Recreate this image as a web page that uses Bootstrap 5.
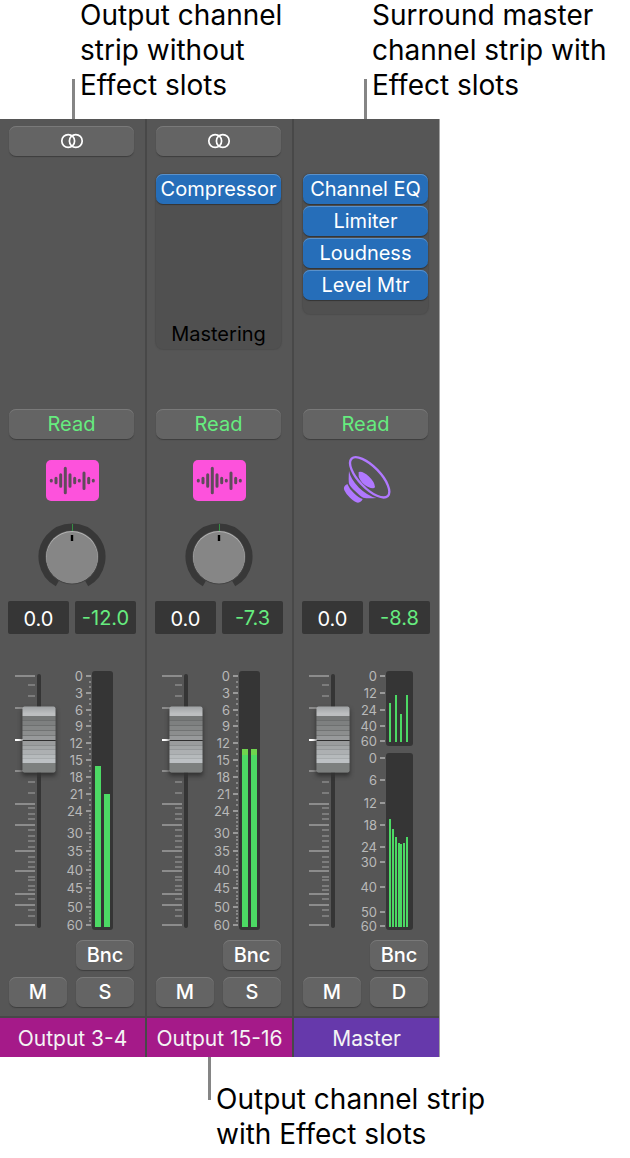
<!DOCTYPE html>
<html lang="en">
<head>
<meta charset="utf-8">
<meta name="viewport" content="width=device-width, initial-scale=1">
<title>Output and master channel strips</title>
<link rel="stylesheet" href="https://cdn.jsdelivr.net/npm/bootstrap@5.3.0/dist/css/bootstrap.min.css">
<style>
body { font-family: Inter, "Liberation Sans", sans-serif; background: #fff; color: #000; }
.callouts { display: grid; grid-template-columns: 292px 1fr; height: 119px; }
.callout-text { font-size: 28px; line-height: 35px; margin: -2px 0 0 5px; white-space: nowrap; }
.leader { width: 3px; height: 40px; background: #858585; flex: none; }
.callout-top { padding-left: 72px; }
.callout-bottom { padding-left: 208px; }
.callout-bottom .leader { height: 43px; }
.callout-bottom .callout-text { margin: 25px 0 0 5px; }

.mixer { display: grid; grid-template-columns: 147fr 147fr 146fr; max-width: 440px; background: #565656; color: #f4f4f4; font-size: 20px; line-height: 30px; }
.strip { display: flex; flex-direction: column; border-right: 2px solid #484848; padding-top: 7px; }
.strip:last-child { border-right: 1px solid #a2a2a2; }
.inset { margin-left: 9px; margin-right: 11px; }
.key { height: 30px; padding: 0; border: 0; border-radius: 7px; color: #fff; background: #646464; font: inherit; box-shadow: inset 0 1px #797979, 0 1px 1px #3e3e3e; display: flex; align-items: center; justify-content: center; }
.key-read { color: #66ec7f; }
.io { height: 30px; }
.effects { height: 235px; margin-top: 18px; }
.rack { background: #505050; border-radius: 7px; display: flex; flex-direction: column; gap: 2px; box-shadow: 0 0 1px 1px #4d4d4d; }
.rack-tall { height: 175px; }
.rack-short { height: 140px; }
.fx { background: #266eb9; box-shadow: inset 0 1px #5a91ca, 0 1px 1px #333; white-space: nowrap; }
.channel-icon { height: 50px; margin-top: 16px; }
.pan { height: 68px; margin-top: 18px; position: relative; }
.pan input { width: 66px; }
.readouts { display: grid; grid-template-columns: 1fr 1fr; gap: 6px; margin: 10px 9px 0 8px; }
.readout { height: 33px; line-height: 31px; min-width: 0; width: 100%; padding: 2px 0 0; border: 0; border-radius: 2px; background: #363636; color: #fff; text-align: center; }
.peak { color: #66ec7f; }
.levels { position: relative; height: 268px; margin-top: 34px; }
.levels svg { display: block; }
.levels text { font-size: 13px; fill: #b9b9b9; text-anchor: end; }
.fader { position: absolute; left: -89px; top: 116px; width: 256px; height: 33px; margin: 0; transform: rotate(-90deg); appearance: none; -webkit-appearance: none; background: transparent; }
.fader::-webkit-slider-thumb {
  -webkit-appearance: none; width: 66px; height: 33px; border-radius: 2px; box-shadow: -3px 0 4px #333;
  background: linear-gradient(to right, #7d807f 0 9px, #bdc1c4 9px 14px, #a9adaf 14px 15px, #b6babc 15px 18px, #a0a4a6 18px 19px, #adb0b2 19px 23px, #95989a 23px 24px, #a3a6a7 24px 27px, #8b8e8f 27px 28px, #9a9c9d 28px 32px, #2e2e2e 32px 33px, #989a9b 33px 37px, #787a7a 37px 38px, #8c8e8e 38px 42px, #727474 42px 43px, #858787 43px 47px, #6e7070 47px 48px, #7e8080 48px 52px, #6c6e6e 52px 53px, #757777 53px 57px, #bcbec0 57px 59px, #a3a6a8 65px 66px);
}
.buttons { display: grid; grid-template-columns: 1fr 1fr; column-gap: 9px; row-gap: 7px; margin-top: 4px; font-weight: 500; }
.bounce { grid-column: 2; }
.strip-name { margin-top: 9px; border-top: 2px solid #484848; height: 41px; font-size: 21px; line-height: 37px; text-align: center; white-space: nowrap; }
.strip-name span { padding-top: 2px; }
.name-output span { background: #a51a89; }
.name-master span { background: #6639ab; }
</style>
</head>
<body>

<svg width="0" height="0" class="position-absolute" aria-hidden="true">
  <defs>
    <symbol id="stereo" viewBox="0 0 24 16">
      <g fill="none" stroke="#fff" stroke-width="1.7"><circle cx="8.2" cy="8" r="6.4"/><circle cx="15.8" cy="8" r="6.4"/></g>
    </symbol>
    <symbol id="wave" viewBox="0 0 53 41">
      <rect width="53" height="41" rx="5" fill="#fd52dc"/>
      <path d="M5.3 20.3v.6M10 18.3v4.4M14.7 14.8v11.4M19.3 8.2v24.6M24 14.8v11.4M28.7 18.3v4.4M33.3 20.3v.6M38 13v15.6M42.7 18.3v4.4M47.3 20.3v.6" stroke="#614a5c" stroke-width="3" stroke-linecap="round"/>
    </symbol>
    <symbol id="speaker" viewBox="157 163 150 150">
      <g fill="#b078ff">
        <ellipse cx="240" cy="230" rx="78" ry="32" transform="rotate(46 240 230)" fill="none" stroke="#b078ff" stroke-width="7"/>
        <path d="M207 214q12-4 30 13t19 32q-3 8-22-1t-27-30z"/>
        <path d="M178 211q5 25 30 50 25 24 52 31-26 2-39-1-7-2-24-19-17-16-19-23-2-10 0-38z"/>
        <path d="M173 250q-14 7-9 19 4 10 17 22 14 13 24 15 10-1 14-11-12-3-26-17-14-13-20-28z"/>
      </g>
    </symbol>
    <symbol id="knob" viewBox="0 0 68 68">
      <path d="M19.5 60.2A30 30 0 1 1 48.5 60.2" fill="none" stroke="#383838" stroke-width="7"/>
      <circle cx="34" cy="35" r="26.5" fill="#454545"/>
      <circle cx="34" cy="34" r="26" fill="#b5b5b5"/>
      <circle cx="34" cy="34.7" r="25.7" fill="#868686"/>
      <path d="M34.5 1v7" stroke="#359044"/>
      <path d="M34 12v6" stroke="#000" stroke-width="2.4"/>
    </symbol>
  </defs>
</svg>

<header class="callouts">
  <div class="callout-top d-flex align-items-end"><span class="leader"></span>
    <p class="callout-text align-self-start">Output channel<br>strip without<br>Effect slots</p></div>
  <div class="callout-top d-flex align-items-end"><span class="leader"></span>
    <p class="callout-text align-self-start">Surround master<br>channel strip with<br>Effect slots</p></div>
</header>

<main class="mixer">
  <section class="strip" aria-label="Output 3-4">
    <button type="button" class="key inset" aria-label="Stereo format"><svg width="24" height="16"><use href="#stereo"/></svg></button>
    <div class="effects"></div>
    <button type="button" class="key key-read inset">Read</button>
    <div class="channel-icon d-flex justify-content-center align-items-center"><svg width="53" height="41"><use href="#wave"/></svg></div>
    <label class="pan inset d-flex justify-content-center"><svg width="68" height="68"><use href="#knob"/></svg>
      <input type="range" min="-64" max="63" value="0" class="opacity-0 position-absolute h-100" aria-label="Pan"></label>
    <div class="readouts"><input class="readout" value="0.0" aria-label="Volume"><output class="readout peak">-12.0</output></div>
    <div class="levels" data-meter="first"><input type="range" class="fader" value="82" aria-label="Fader"></div>
    <div class="buttons inset"><button type="button" class="key bounce">Bnc</button><button type="button" class="key">M</button><button type="button" class="key">S</button></div>
    <div class="strip-name name-output"><span class="d-block">Output 3-4</span></div>
  </section>

  <section class="strip" aria-label="Output 15-16">
    <button type="button" class="key inset" aria-label="Stereo format"><svg width="24" height="16"><use href="#stereo"/></svg></button>
    <div class="effects inset"><div class="rack rack-tall">
      <button type="button" class="key fx">Compressor</button>
      <div class="mt-auto text-center text-black">Mastering</div>
    </div></div>
    <button type="button" class="key key-read inset">Read</button>
    <div class="channel-icon d-flex justify-content-center align-items-center"><svg width="53" height="41"><use href="#wave"/></svg></div>
    <label class="pan inset d-flex justify-content-center"><svg width="68" height="68"><use href="#knob"/></svg>
      <input type="range" min="-64" max="63" value="0" class="opacity-0 position-absolute h-100" aria-label="Pan"></label>
    <div class="readouts"><input class="readout" value="0.0" aria-label="Volume"><output class="readout peak">-7.3</output></div>
    <div class="levels" data-meter="second"><input type="range" class="fader" value="82" aria-label="Fader"></div>
    <div class="buttons inset"><button type="button" class="key bounce">Bnc</button><button type="button" class="key">M</button><button type="button" class="key">S</button></div>
    <div class="strip-name name-output"><span class="d-block">Output 15-16</span></div>
  </section>

  <section class="strip" aria-label="Master">
    <div class="io"></div>
    <div class="effects inset"><div class="rack rack-short">
      <button type="button" class="key fx">Channel EQ</button>
      <button type="button" class="key fx">Limiter</button>
      <button type="button" class="key fx">Loudness</button>
      <button type="button" class="key fx">Level Mtr</button>
    </div></div>
    <button type="button" class="key key-read inset">Read</button>
    <div class="channel-icon d-flex justify-content-center align-items-center"><svg width="50" height="50"><use href="#speaker"/></svg></div>
    <div class="pan"></div>
    <div class="readouts"><input class="readout" value="0.0" aria-label="Volume"><output class="readout peak">-8.8</output></div>
    <div class="levels" data-meter="master"><input type="range" class="fader" value="82" aria-label="Fader"></div>
    <div class="buttons inset"><button type="button" class="key bounce">Bnc</button><button type="button" class="key">M</button><button type="button" class="key">D</button></div>
    <div class="strip-name name-master"><span class="d-block">Master</span></div>
  </section>
</main>

<footer class="callout-bottom d-flex align-items-start"><span class="leader"></span>
  <p class="callout-text">Output channel strip<br>with Effect slots</p></footer>

<script src="https://cdn.jsdelivr.net/npm/bootstrap@5.3.0/dist/js/bootstrap.bundle.min.js"></script>
<script>
// Fader scale: long and short graduations, measured down the strip.
const longTicks = [8, 40, 103, 136, 157, 183, 203, 226, 237, 257];
const shortTicks = [17, 28, 114, 125, 140, 146, 151, 162, 168, 173, 179, 189, 194, 199, 209, 212, 218, 222, 231, 242, 248];

// Meter scales as [label, position, subdivisions up to the next label].
const stereoScale = [[0,8,3],[3,25,3],[6,42,3],[9,58,3],[12,75,3],[15,92,3],[18,109,3],[21,126,3],[24,143,6],[30,165,5],[35,183,5],[40,202,5],[45,220,5],[50,239,5],[60,257,0]];
const meters = {
  first:  [{ box: [3, 262, 21], scale: stereoScale, wide: 6, floor: 259, bars: [[95, 98], [104, 126]] }],
  second: [{ box: [3, 262, 21], scale: stereoScale, wide: 6, floor: 259, bars: [[95, 81], [104, 81]] }],
  master: [
    { box: [3, 78, 27], wide: 2, floor: 74, scale: [[0,8],[12,25],[24,42],[40,58],[60,73]],
      bars: [[95,35],[101,27],[106,46],[112,27]] },
    { box: [85, 262, 27], wide: 2, floor: 259, scale: [[0,90],[6,112],[12,135],[18,157],[24,179],[30,194],[40,219],[50,244],[60,258]],
      bars: [[95,151],[98,161],[101,169],[104,175],[106,176],[109,175],[112,169]] }
  ]
};
const rect = (x, y, w, h, fill, extra = '') => `<rect x="${x}" y="${y}" width="${w}" height="${h}" fill="${fill}" ${extra}/>`;

document.querySelectorAll('.levels').forEach(el => {
  const tick = '#8c8c8c';
  let s = rect(37, 6, 4, 254, '#353535', 'rx="2"');
  longTicks.forEach(y => s += rect(15, y - 1, 20, 2, tick));
  shortTicks.forEach(y => s += rect(28, y - 1, 7, 2, '#7c7c7c'));
  s += rect(15, 71, 20, 2, '#fff');
  meters[el.dataset.meter].forEach(m => {
    const [top, bottom, width] = m.box;
    s += rect(92, top, width, bottom - top, '#353535', 'rx="3"');
    m.scale.forEach(([label, y, parts], i) => {
      s += `<text x="83" y="${y + 5}">${label}</text>` + rect(86, y - 1, 5, 2, '#999');
      for (let k = 1; k < (parts || 0); k++)
        s += rect(89, Math.round(y - 1 + (m.scale[i + 1][1] - y) * k / parts), 2, 2, '#888');
    });
    m.bars.forEach(([x, y]) => {
      s += rect(x, y, m.wide, m.floor - y, '#4cd964');
      if (y === 81) s += rect(x, y, m.wide, 6, '#6fd44e');
    });
  });
  el.insertAdjacentHTML('afterbegin', `<svg width="145" height="268" viewBox="0 0 145 268">${s}</svg>`);
});
</script>
</body>
</html>
